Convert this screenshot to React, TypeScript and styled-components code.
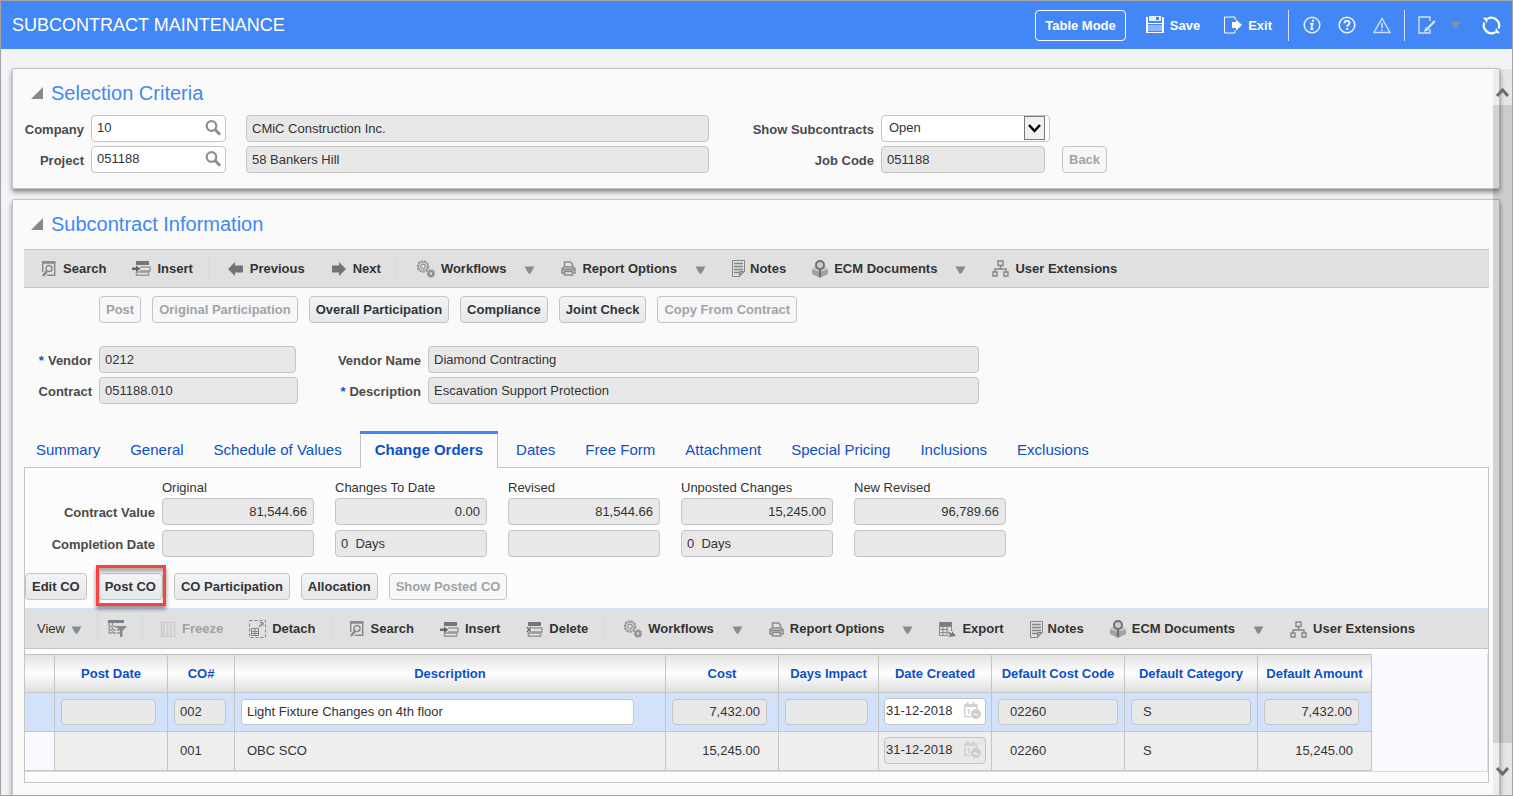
import React from "react";
import styled, { createGlobalStyle, css } from "styled-components";

const GlobalStyle = createGlobalStyle`
  * { box-sizing: border-box; }
  body {
    margin: 0;
    background: #f1f3f6;
    color: #333;
    font: 13px/16px "Liberation Sans", Arial, sans-serif;
  }
  input, button, select { font: inherit; color: inherit; }
  svg { display: block; flex: none; }
`;

/* ---------- Page frame ---------- */

const Page = styled.div`
  display: flex;
  flex-direction: column;
  height: 100vh;
  border: 1px solid #a3a3a3;
  overflow: hidden;
`;

const Header = styled.header`
  flex: none;
  display: flex;
  align-items: center;
  justify-content: space-between;
  height: 48px;
  padding: 0 11px;
  background: #4287f5;
  color: #fff;
`;

const PageTitle = styled.h1`
  margin: 0;
  font-size: 18px;
  line-height: 24px;
  font-weight: 400;
`;

const HeaderActions = styled.div`
  display: flex;
  align-items: center;
  height: 32px;
`;

const OutlineButton = styled.button`
  height: 31px;
  padding: 2px 9px 0;
  margin-right: 20px;
  border: 1px solid #fff;
  border-radius: 4px;
  background: none;
  font-weight: 700;
`;

const HeaderButton = styled.button<{ $after?: number }>`
  display: flex;
  align-items: flex-end;
  gap: 6px;
  padding: 0;
  margin-right: ${(p) => p.$after ?? 17}px;
  border: 0;
  background: none;
  font-weight: 700;
`;

const HeaderDivider = styled.span<{ $after: number }>`
  width: 1px;
  height: 31px;
  margin-right: ${(p) => p.$after}px;
  background: #d5e4fd;
`;

const Body = styled.main`
  position: relative;
  flex: 1;
  min-height: 0;
  display: flex;
  flex-direction: column;
  gap: 10px;
  padding: 19px 12px 0 11px;
`;

const Card = styled.section<{ $fill?: boolean }>`
  flex: ${(p) => (p.$fill ? "1 0 auto" : "none")};
  padding: 12px 10px 15px 11px;
  border: 1px solid #c4c4c4;
  border-radius: 2px;
  background: #fafafa;
  box-shadow: 0 3px 5px rgba(0, 0, 0, 0.45);
`;

const CardHeading = styled.h2`
  display: flex;
  align-items: center;
  gap: 8px;
  margin: 0 0 10px;
  padding-left: 7px;
  color: #4287f5;
  font-size: 20px;
  line-height: 24px;
  font-weight: 400;
`;

const ScrollTrack = styled.div`
  position: absolute;
  top: 20px;
  right: 0;
  bottom: 0;
  width: 19px;
  display: flex;
  flex-direction: column;
  background: rgba(0, 0, 0, 0.05);
`;

const ScrollButton = styled.button<{ $down?: boolean }>`
  display: flex;
  justify-content: center;
  align-items: center;
  height: ${(p) => (p.$down ? 52 : 36)}px;
  padding: ${(p) => (p.$down ? "6px 0 0" : "10px 0 0")};
  border: 0;
  background: none;
`;

const ScrollThumb = styled.div`
  flex: 1;
  background: rgba(0, 0, 0, 0.11);
`;

/* ---------- Form parts ---------- */

const FieldGrid = styled.div<{ $columns: string }>`
  display: grid;
  grid-template-columns: ${(p) => p.$columns};
  column-gap: 7px;
  row-gap: 4px;
  align-items: center;
`;

const Label = styled.label`
  padding-top: 2px;
  text-align: right;
  font-weight: 700;
  color: #4a4a4a;
  white-space: nowrap;
`;

const Required = styled.span`
  color: #0b50c8;
  margin-right: 4px;
`;

const fieldBox = css`
  height: 27px;
  border: 1px solid #c4c4c4;
  border-radius: 4px;
`;

const TextInput = styled.input<{
  $width?: number;
  $right?: boolean;
  $indent?: number;
  $cell?: boolean;
}>`
  ${fieldBox}
  display: block;
  width: ${(p) => (p.$width ? `${p.$width}px` : "100%")};
  height: ${(p) => (p.$cell ? 26 : 27)}px;
  padding: 0 6px 1px ${(p) => p.$indent ?? 5}px;
  background: ${(p) => (p.readOnly ? "#e8e8e8" : "#fff")};
  text-align: ${(p) => (p.$right ? "right" : "left")};
  outline: none;
`;

const Compound = styled.div<{ $width: number; $off?: boolean }>`
  ${fieldBox}
  display: flex;
  align-items: center;
  width: ${(p) => p.$width}px;
  background: ${(p) => (p.$off ? "#e8e8e8" : "#fff")};
`;

const BareInput = styled.input<{ $indent: number }>`
  flex: 1;
  min-width: 0;
  padding: 0 0 1px ${(p) => p.$indent}px;
  border: 0;
  background: none;
  outline: none;
`;

const IconButton = styled.button`
  padding: 0 4px 2px 0;
  border: 0;
  background: none;
`;

const SelectWrap = styled.div`
  ${fieldBox}
  position: relative;
  width: 169px;
  background: #fff;
`;

const Select = styled.select`
  appearance: none;
  width: 100%;
  height: 25px;
  padding: 0 30px 1px 7px;
  border: 0;
  background: none;
  outline: none;
`;

const SelectArrow = styled.span`
  position: absolute;
  top: 0;
  right: 4px;
  display: flex;
  align-items: center;
  justify-content: center;
  width: 21px;
  height: 24px;
  border: 1px solid #777;
  background: #f1f1f1;
  pointer-events: none;
`;

const PushButton = styled.button`
  height: 27px;
  padding: 0 6px;
  border: 1px solid #c4c4c4;
  border-radius: 4px;
  background: linear-gradient(#f3f4f6, #e4e8eb);
  font-weight: 700;
  white-space: nowrap;
  &:disabled {
    background: #f6f7f9;
    color: #a3a3a3;
  }
`;

const ButtonRow = styled.div<{ $indent?: number }>`
  display: flex;
  gap: 11px;
  padding-left: ${(p) => p.$indent ?? 0}px;
`;

const Highlighted = styled.div`
  position: relative;
  display: flex;
  &::after {
    content: "";
    position: absolute;
    inset: -8px -3px -6px -2px;
    border: 3px solid #f94343;
    box-shadow: 0 3px 4px rgba(0, 0, 0, 0.45), inset 0 4px 3px rgba(0, 0, 0, 0.3);
    pointer-events: none;
  }
`;

/* ---------- Toolbars ---------- */

const Bar = styled.div<{ $table?: boolean }>`
  display: flex;
  align-items: center;
  height: ${(p) => (p.$table ? 41 : 39)}px;
  padding-left: ${(p) => (p.$table ? 12 : 17)}px;
  border-top: ${(p) => (p.$table ? "2px solid #d3e2fb" : "1px solid #c4c4c4")};
  border-bottom: 1px solid #c4c4c4;
  background: #e0e0e0;
`;

const BarSpace = styled.div`
  margin: 13px 0 8px;
`;

const TableBarSpace = styled.div`
  margin-top: 8px;
`;

const ToolButton = styled.button<{ $plain?: boolean; $gap?: number }>`
  display: flex;
  align-items: center;
  gap: ${(p) => p.$gap ?? 6}px;
  padding: 0;
  margin-right: 26px;
  border: 0;
  background: none;
  color: #333;
  font-weight: ${(p) => (p.$plain ? 400 : 700)};
  white-space: nowrap;
  &:disabled { color: #a0a0a0; }
`;

const CaretSlot = styled.span<{ $near?: boolean }>`
  padding-top: 2px;
  margin-left: ${(p) => (p.$near ? 0 : 12)}px;
`;

const BarDivider = styled.span<{ $after?: number }>`
  width: 1px;
  height: 33px;
  margin: 0 ${(p) => p.$after ?? 19}px 0 -11px;
  background: #d3dde4;
`;

/* ---------- Tabs and panel ---------- */

const VendorFields = styled.div`
  margin-top: 23px;
`;

const Tabs = styled.nav`
  display: flex;
  gap: 6px;
  margin: 27px 0 -1px;
`;

const Tab = styled.a<{ $active?: boolean }>`
  position: relative;
  height: 37px;
  padding: 7px ${(p) => (p.$active ? 15 : 12)}px 0;
  border: 0 solid transparent;
  border-top-width: 3px;
  color: #0b50c8;
  font-size: 15px;
  line-height: 18px;
  text-decoration: none;
  white-space: nowrap;
  ${(p) =>
    p.$active &&
    css`
      border-color: #4287f5;
      background: #fcfcfc;
      box-shadow: inset 1px 0 #c4c4c4, inset -1px 0 #c4c4c4;
      font-weight: 700;
    `}
`;

const Panel = styled.div`
  padding: 12px 0 10px;
  border: 1px solid #c4c4c4;
  background: #fcfcfc;
`;

const ValueGrid = styled.div`
  display: grid;
  grid-template-columns: 130px repeat(5, 152px);
  column-gap: 21px;
  row-gap: 5px;
  align-items: center;
  margin: 0 0 16px -14px;
`;

const ColumnTitle = styled.span`
  margin-bottom: -3px;
`;

const ValueLabel = styled(Label)`
  margin-right: -14px;
`;

/* ---------- Change order table ---------- */

const TableArea = styled.div`
  margin-top: 5px;
  border-right: 1px solid #d3e2ea;
  border-bottom: 1px solid #cfdde6;
  background: #f8faff;
`;

const Table = styled.table`
  table-layout: fixed;
  width: 1347px;
  border-spacing: 0;
  border-top: 1px solid #c4c4c4;
`;

const HeadCell = styled.th`
  height: 38px;
  padding: 0;
  border: solid #c4c4c4;
  border-width: 0 1px 1px 0;
  background: linear-gradient(#e2e2e2, #fefefe 50%, #dedede);
  color: #0b50c8;
`;

const Cell = styled.td<{ $selected?: boolean; $text?: number; $right?: boolean; $head?: boolean }>`
  height: 39px;
  padding: 0 ${(p) => (p.$right ? 18 : 4)}px 1px ${(p) => p.$text ?? 6}px;
  border: solid #c4c4c4;
  border-width: 0 1px 1px 0;
  background: ${(p) => (p.$selected ? "#d3e2fb" : p.$head ? "#f8faff" : "#eee")};
  text-align: ${(p) => (p.$right ? "right" : "left")};
`;

/* ---------- Icons ---------- */

const Disclosure = () => (
  <svg width="12" height="12" viewBox="0 0 12 12"><path d="M12 0v12H0z" fill="#868a8e" /></svg>
);
const Caret = ({ color = "#868b90" }: { color?: string }) => (
  <svg width="11" height="8" viewBox="0 0 11 8"><path d="M.5 .5h10L6.500 7.500h-2z" fill={color} /></svg>
);
const Chevron = ({ down }: { down?: boolean }) => (
  <svg width="13" height="10" viewBox="0 0 13 10" fill="none" stroke="#6b6b6b" strokeWidth="3">
    <path d={down ? "M1 1l5.500 6L12 1" : "M1 9l5.500-6L12 9"} />
  </svg>
);
const Magnifier = () => (
  <svg width="16" height="16" viewBox="0 0 16 16" fill="none" stroke="#8a8f94">
    <circle cx="6.500" cy="6" r="4.800" strokeWidth="2.200" />
    <path d="M10.500 10l3.700 3.700" strokeWidth="3" strokeLinecap="round" />
  </svg>
);
const SaveIcon = () => (
  <svg width="18" height="18" viewBox="0 0 18 18">
    <path d="M0 1h2v6h14V1h1l1 1v15H0z" fill="#fff" />
    <path d="M3 0h12v5H3z" fill="#e4eefe" /><path d="M10 1h3v3h-3z" fill="#4287f5" />
    <path d="M2 9h14v7H2z" fill="#8fb8fa" /><path d="M2 8h14v1H2zM2 15h14v1H2z" fill="#4287f5" />
  </svg>
);
const ExitIcon = () => (
  <svg width="18" height="18" viewBox="0 0 18 18">
    <path d="M11 4V1H.5v16H11v-3" fill="none" stroke="#fff" />
    <path d="M8 6h4V3.500L18 9l-6 5.500V12H8z" fill="#fff" />
  </svg>
);
const InfoIcon = () => (
  <svg width="18" height="18" viewBox="0 0 18 18" fill="none" stroke="#e7f0fe">
    <circle cx="9" cy="9" r="7.800" strokeWidth="1.500" />
    <path d="M7 7.800h2.500L8.300 13h2.200" strokeWidth="2" /><path d="M9 4.700h2" strokeWidth="2.200" />
  </svg>
);
const HelpIcon = () => (
  <svg width="18" height="18" viewBox="0 0 18 18" fill="none" stroke="#f2f7ff">
    <circle cx="9" cy="9" r="7.800" strokeWidth="1.500" />
    <path d="M6.500 7.200C6.500 4 11.500 4 11.500 7c0 1.800-2.300 1.800-2.300 3.800" strokeWidth="2" />
    <path d="M8.200 13h2" strokeWidth="2" />
  </svg>
);
const WarnIcon = () => (
  <svg width="18" height="17" viewBox="0 0 18 17" fill="none" stroke="#cfe0fc">
    <path d="M9 1.500L17 15.500H1z" strokeWidth="1.400" /><path d="M9 6v5M9 12.500v1.500" strokeWidth="1.600" />
  </svg>
);
const EditIcon = () => (
  <svg width="18" height="18" viewBox="0 0 18 18" fill="none" stroke="#d7e5fd">
    <path d="M12 5V1H1v16h11v-4" strokeWidth="1.300" />
    <path d="M16.800 5L9 13" strokeWidth="2.200" /><path d="M8 11.500l-2 4 4.500-1.500z" fill="#d7e5fd" strokeWidth=".5" />
  </svg>
);
const RefreshIcon = () => (
  <svg width="19" height="19" viewBox="0 0 19 19" fill="none" stroke="#fff" strokeWidth="2.200">
    <path d="M6 2.500A7.800 7.800 0 0 1 16.600 12.500M13 16.500A7.800 7.800 0 0 1 2.400 6.500" />
    <path d="M1 1.500l5 .5-1 5zM18 17.500l-5-.5 1-5z" fill="#fff" stroke="none" />
  </svg>
);
const SearchIcon = () => (
  <svg width="16" height="16" viewBox="0 0 16 16" fill="none" stroke="#8a8a8a">
    <path d="M1.700 11V1h12v13.300H6" strokeWidth="1.500" /><path d="M1 1.500h13.500" strokeWidth="2.500" />
    <circle cx="8" cy="7.500" r="3" strokeWidth="1.500" /><path d="M6 10l-4 5" strokeWidth="2.500" />
  </svg>
);
const RowsIcon = ({ remove }: { remove?: boolean }) => (
  <svg width={remove ? 17 : 19} height="15" viewBox={remove ? "2 0 17 15" : "0 0 19 15"}>
    <path d="M4 0h13v4H4z" fill="#757575" />
    <path d="M8 6h10v4H8M4.500 14.200v-3.200h12v3.200z" fill="none" stroke="#999" strokeWidth="1.500" />
    {remove ? (
      <path d="M3 5l4 5M7 5l-4 5" stroke="#757575" strokeWidth="1.500" />
    ) : (
      <path d="M0 6.500h4V4.500l4.500 3.300-4.500 3.200V9H0z" fill="#666" />
    )}
  </svg>
);
const ArrowIcon = ({ right }: { right?: boolean }) => (
  <svg width="16" height="14" viewBox="0 0 16 14">
    <path d={right ? "M15 7L8 0v3.500H1v7h7V14z" : "M0 7l7-7v3.500h8v7H7V14z"} fill="#737373" />
  </svg>
);
const GearsIcon = () => (
  <svg width="19" height="18" viewBox="0 0 19 18" fill="none" stroke="#929292">
    <circle cx="7" cy="6.500" r="5.500" strokeWidth="1.500" strokeDasharray="2.200 1.100" />
    <circle cx="7" cy="6.500" r="4.500" strokeWidth="1.200" /><circle cx="7" cy="6.500" r="2.300" strokeWidth="1.200" />
    <circle cx="15" cy="13.500" r="2.300" strokeWidth="2.200" />
    <circle cx="15" cy="13.500" r="3.700" strokeWidth="1.200" strokeDasharray="1.500 1" />
  </svg>
);
const PrinterIcon = () => (
  <svg width="15" height="15" viewBox="0 0 15 15" fill="none" stroke="#8a8a8a" strokeWidth="1.500">
    <path d="M3.500 6V1h6l2 2v3M3 12H1V7.500L3 6h9l2 1.500V12h-2" />
    <path d="M1.500 8.500h12" strokeWidth="2" /><path d="M3.500 10.500h8V14h-8z" fill="#e0e0e0" />
  </svg>
);
const NotesIcon = () => (
  <svg width="13" height="17" viewBox="0 0 13 17" fill="none" stroke="#858585">
    <path d="M12.500 11.500V.5H.5v16h7" /><path d="M2 3.500h9M2 6.500h9M2 9.500h9M2 12.500h5" strokeWidth="1.300" />
    <path d="M7.500 16.500v-5h5z" fill="#a5a5a5" />
  </svg>
);
const EcmIcon = () => (
  <svg width="16" height="18" viewBox="0 0 16 18">
    <path d="M0 9l8 3 8-3v5l-8 4-8-4z" fill="#a2a2a2" /><path d="M0 8l4-1 4 4 4-4 4 1-8 4z" fill="#bbb" />
    <circle cx="8" cy="5" r="4" fill="#ccc" stroke="#707070" strokeWidth="2" />
    <path d="M8 9.500V17" stroke="#707070" strokeWidth="2.200" />
  </svg>
);
const OrgIcon = () => (
  <svg width="17" height="17" viewBox="0 0 17 17" fill="none" stroke="#858585" strokeWidth="1.400">
    <path d="M6 1h5v4.500H6zM1 12h4v4H1zM12 12h4v4h-4zM8.500 5.500V9M3 12V9h11v3" />
  </svg>
);
const FilterIcon = () => (
  <svg width="19" height="18" viewBox="0 0 19 18">
    <path d="M0 0h16v3H0z" fill="#7b7f83" />
    <path d="M1 3v10.500M1 6.500h8M1 10h10M1 13h11M4.500 3v10" fill="none" stroke="#8f9498" strokeWidth="1.300" strokeDasharray="3 1" />
    <path d="M7 6h12l-4.500 5v6H12v-6z" fill="#868b90" />
  </svg>
);
const FreezeIcon = () => (
  <svg width="16" height="16" viewBox="0 0 16 16" fill="none" stroke="#cacaca">
    <path d="M.5 1.500h15M.5 15.500h15" /><path d="M1.500 2v13M4 2v13M7.500 4v11M11 4v11M14.500 2v13" strokeWidth="1.500" />
  </svg>
);
const DetachIcon = () => (
  <svg width="17" height="18" viewBox="0 0 17 18" fill="none" stroke="#858585">
    <path d="M.5.5h16v17H.5z" strokeDasharray="3 2" />
    <path d="M2.500 8.500h7v7h-7zM2.500 11.500h7M6 9v6M2.500 13.500h7" /><path d="M10 7l4-4" strokeWidth="1.500" /><path d="M10.500 2.500H14V6" />
  </svg>
);
const ExportIcon = () => (
  <svg width="17" height="15" viewBox="0 0 17 15">
    <path d="M0 0h13v4H0z" fill="#7b7b7b" />
    <path d="M.5 1v12.500h8M.5 4.500h12M.5 7.500h9M.5 10.500h8M4 4v9.500M8 4v9.500M12.500 1v8" fill="none" stroke="#8c8c8c" />
    <path d="M8 9l5 2.500V9l4 5-8 1 2-2z" fill="#777" />
  </svg>
);
const CalendarIcon = () => (
  <svg width="17" height="17" viewBox="0 0 17 17" fill="none" stroke="#d2d2d2">
    <path d="M7 14.500H.8V3h12v4" strokeWidth="1.500" /><path d="M1 3.500h12" strokeWidth="3" />
    <path d="M3.500 0v3M9.500 0v3" strokeWidth="2" /><path d="M3.500 8H5v4" strokeWidth="1.500" />
    <circle cx="12" cy="12" r="5" fill="#cdcdcd" stroke="none" /><path d="M9.500 11.500l2.500 1.500h2.500" stroke="#fff" strokeWidth="1.200" />
  </svg>
);

/* ---------- Composed parts ---------- */

const Tool = ({ icon, label, menu, disabled, gap }: {
  icon: React.ReactNode; label: string; menu?: boolean; disabled?: boolean; gap?: number;
}) => (
  <ToolButton disabled={disabled} $gap={gap}>
    {icon}
    {label}
    {menu && <CaretSlot><Caret /></CaretSlot>}
  </ToolButton>
);

const DateField = ({ off, label }: { off?: boolean; label: string }) => (
  <Compound $width={102} $off={off}>
    <BareInput $indent={1} defaultValue="31-12-2018" readOnly={off} aria-label={label} />
    <IconButton aria-label="Pick date" disabled={off}><CalendarIcon /></IconButton>
  </Compound>
);

const values = [
  { title: "Original", amount: "81,544.66", days: "" },
  { title: "Changes To Date", amount: "0.00", days: "0  Days" },
  { title: "Revised", amount: "81,544.66", days: "" },
  { title: "Unposted Changes", amount: "15,245.00", days: "0  Days" },
  { title: "New Revised", amount: "96,789.66", days: "" },
];

const tabs = [
  "Summary", "General", "Schedule of Values", "Change Orders", "Dates", "Free Form",
  "Attachment", "Special Pricing", "Inclusions", "Exclusions",
];

const columns: [string, number][] = [
  ["", 30], ["Post Date", 113], ["CO#", 67], ["Description", 431], ["Cost", 113],
  ["Days Impact", 100], ["Date Created", 113], ["Default Cost Code", 133],
  ["Default Category", 133], ["Default Amount", 114],
];

export default function App() {
  return (
    <Page>
      <GlobalStyle />
      <Header>
        <PageTitle>SUBCONTRACT MAINTENANCE</PageTitle>
        <HeaderActions>
          <OutlineButton>Table Mode</OutlineButton>
          <HeaderButton $after={24}><SaveIcon />Save</HeaderButton>
          <HeaderButton $after={16}><ExitIcon />Exit</HeaderButton>
          <HeaderDivider $after={14} />
          <HeaderButton aria-label="Information"><InfoIcon /></HeaderButton>
          <HeaderButton aria-label="Help"><HelpIcon /></HeaderButton>
          <HeaderButton aria-label="Warnings" $after={13}><WarnIcon /></HeaderButton>
          <HeaderDivider $after={13} />
          <HeaderButton aria-label="Edit" $after={14}><EditIcon /></HeaderButton>
          <HeaderButton aria-label="Edit options" $after={21}><Caret color="#8291a8" /></HeaderButton>
          <HeaderButton aria-label="Refresh" $after={0}><RefreshIcon /></HeaderButton>
        </HeaderActions>
      </Header>

      <Body>
        <Card>
          <CardHeading><Disclosure />Selection Criteria</CardHeading>
          <FieldGrid $columns="60px 148px 463px 158px 174px auto">
            <Label htmlFor="company">Company</Label>
            <Compound $width={135}>
              <BareInput id="company" $indent={5} defaultValue="10" />
              <IconButton aria-label="Find company"><Magnifier /></IconButton>
            </Compound>
            <TextInput readOnly value="CMiC Construction Inc." aria-label="Company name" />
            <Label htmlFor="show">Show Subcontracts</Label>
            <SelectWrap>
              <Select id="show" defaultValue="Open"><option>Open</option></Select>
              <SelectArrow>
                <svg width="13" height="9" viewBox="0 0 13 9" fill="none" stroke="#000" strokeWidth="2.500">
                  <path d="M1 1l5.500 6L12 1" />
                </svg>
              </SelectArrow>
            </SelectWrap>
            <span />
            <Label htmlFor="project">Project</Label>
            <Compound $width={135}>
              <BareInput id="project" $indent={5} defaultValue="051188" />
              <IconButton aria-label="Find project"><Magnifier /></IconButton>
            </Compound>
            <TextInput readOnly value="58 Bankers Hill" aria-label="Project name" />
            <Label htmlFor="job">Job Code</Label>
            <TextInput id="job" readOnly value="051188" $width={164} />
            <ButtonRow><PushButton disabled>Back</PushButton></ButtonRow>
          </FieldGrid>
        </Card>

        <Card $fill>
          <CardHeading><Disclosure />Subcontract Information</CardHeading>
          <BarSpace>
            <Bar role="toolbar" aria-label="Subcontract">
              <Tool icon={<SearchIcon />} label="Search" />
              <Tool icon={<RowsIcon />} label="Insert" />
              <BarDivider />
              <Tool icon={<ArrowIcon />} label="Previous" />
              <Tool icon={<ArrowIcon right />} label="Next" />
              <BarDivider />
              <Tool icon={<GearsIcon />} label="Workflows" menu />
              <Tool icon={<PrinterIcon />} label="Report Options" menu />
              <Tool icon={<NotesIcon />} label="Notes" gap={5} />
              <Tool icon={<EcmIcon />} label="ECM Documents" menu />
              <Tool icon={<OrgIcon />} label="User Extensions" />
            </Bar>
          </BarSpace>

          <ButtonRow $indent={75}>
            <PushButton disabled>Post</PushButton>
            <PushButton disabled>Original Participation</PushButton>
            <PushButton>Overall Participation</PushButton>
            <PushButton>Compliance</PushButton>
            <PushButton>Joint Check</PushButton>
            <PushButton disabled>Copy From Contract</PushButton>
          </ButtonRow>

          <VendorFields>
            <FieldGrid $columns="68px 199px 116px 551px">
              <Label htmlFor="vendor"><Required>*</Required>Vendor</Label>
              <TextInput id="vendor" readOnly value="0212" $width={197} />
              <Label htmlFor="vname">Vendor Name</Label>
              <TextInput id="vname" readOnly value="Diamond Contracting" />
              <Label htmlFor="contract">Contract</Label>
              <TextInput id="contract" readOnly value="051188.010" />
              <Label htmlFor="desc"><Required>*</Required>Description</Label>
              <TextInput id="desc" readOnly value="Escavation Support Protection" />
            </FieldGrid>
          </VendorFields>

          <Tabs>
            {tabs.map((t) => (
              <Tab key={t} href="#" $active={t === "Change Orders"}>{t}</Tab>
            ))}
          </Tabs>

          <Panel>
            <ValueGrid>
              <span />
              {values.map((v) => <ColumnTitle key={v.title}>{v.title}</ColumnTitle>)}
              <ValueLabel as="span">Contract Value</ValueLabel>
              {values.map((v) => (
                <TextInput key={v.title} readOnly $right value={v.amount} aria-label={`Contract Value ${v.title}`} />
              ))}
              <ValueLabel as="span">Completion Date</ValueLabel>
              {values.map((v) => (
                <TextInput key={v.title} readOnly value={v.days} aria-label={`Completion Date ${v.title}`} />
              ))}
            </ValueGrid>

            <ButtonRow>
              <PushButton>Edit CO</PushButton>
              <Highlighted><PushButton>Post CO</PushButton></Highlighted>
              <PushButton>CO Participation</PushButton>
              <PushButton>Allocation</PushButton>
              <PushButton disabled>Show Posted CO</PushButton>
            </ButtonRow>

            <TableBarSpace>
              <Bar $table role="toolbar" aria-label="Change orders">
                <ToolButton $plain>View<CaretSlot $near><Caret /></CaretSlot></ToolButton>
                <BarDivider $after={10} />
                <ToolButton aria-label="Query by example"><FilterIcon /></ToolButton>
                <BarDivider $after={17} />
                <Tool icon={<FreezeIcon />} label="Freeze" disabled />
                <Tool icon={<DetachIcon />} label="Detach" />
                <BarDivider $after={17} />
                <Tool icon={<SearchIcon />} label="Search" />
                <Tool icon={<RowsIcon />} label="Insert" />
                <Tool icon={<RowsIcon remove />} label="Delete" />
                <BarDivider />
                <Tool icon={<GearsIcon />} label="Workflows" menu />
                <Tool icon={<PrinterIcon />} label="Report Options" menu />
                <Tool icon={<ExportIcon />} label="Export" />
                <Tool icon={<NotesIcon />} label="Notes" gap={5} />
                <Tool icon={<EcmIcon />} label="ECM Documents" menu />
                <Tool icon={<OrgIcon />} label="User Extensions" />
              </Bar>
            </TableBarSpace>

            <TableArea>
              <Table>
                <colgroup>
                  {columns.map(([name, width]) => <col key={name} width={width} />)}
                </colgroup>
                <thead>
                  <tr>{columns.map(([name]) => <HeadCell key={name}>{name}</HeadCell>)}</tr>
                </thead>
                <tbody>
                  <tr>
                    <Cell $selected />
                    <Cell $selected><TextInput $cell readOnly $width={95} value="" aria-label="Post Date" /></Cell>
                    <Cell $selected><TextInput $cell readOnly $width={52} value="002" aria-label="CO#" /></Cell>
                    <Cell $selected><TextInput $cell $width={393} defaultValue="Light Fixture Changes on 4th floor" aria-label="Description" /></Cell>
                    <Cell $selected><TextInput $cell readOnly $right $width={95} value="7,432.00" aria-label="Cost" /></Cell>
                    <Cell $selected><TextInput $cell readOnly $width={83} value="" aria-label="Days Impact" /></Cell>
                    <Cell $selected $text={5}><DateField label="Date Created, 002" /></Cell>
                    <Cell $selected><TextInput $cell readOnly $indent={11} $width={120} value="02260" aria-label="Default Cost Code" /></Cell>
                    <Cell $selected><TextInput $cell readOnly $indent={11} $width={120} value="S" aria-label="Default Category" /></Cell>
                    <Cell $selected><TextInput $cell readOnly $right $width={95} value="7,432.00" aria-label="Default Amount" /></Cell>
                  </tr>
                  <tr>
                    <Cell $head />
                    <Cell />
                    <Cell $text={12}>001</Cell>
                    <Cell $text={12}>OBC SCO</Cell>
                    <Cell $right>15,245.00</Cell>
                    <Cell />
                    <Cell $text={5}><DateField off label="Date Created, 001" /></Cell>
                    <Cell $text={18}>02260</Cell>
                    <Cell $text={18}>S</Cell>
                    <Cell $right>15,245.00</Cell>
                  </tr>
                </tbody>
              </Table>
            </TableArea>
          </Panel>
        </Card>

        <ScrollTrack>
          <ScrollButton aria-label="Scroll up"><Chevron /></ScrollButton>
          <ScrollThumb />
          <ScrollButton $down aria-label="Scroll down"><Chevron down /></ScrollButton>
        </ScrollTrack>
      </Body>
    </Page>
  );
}
